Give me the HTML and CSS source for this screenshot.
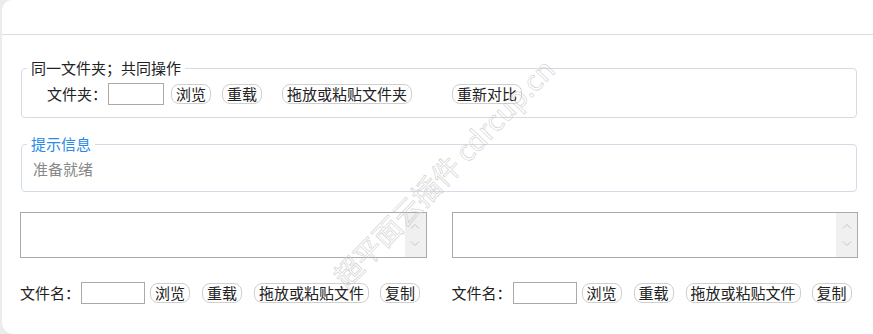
FILE: index.html
```html
<!DOCTYPE html>
<html lang="zh-CN">
<head>
    <meta charset="UTF-8">
    <meta name="viewport" content="width=device-width, initial-scale=1.0">
    <title>文件对比</title>
    <link rel="stylesheet" href="styles.css">
</head>
<body>
    <div class="panel">
        <div class="header"></div>
        <div class="content">
            <fieldset class="group">
                <legend>同一文件夹；共同操作</legend>
                <div class="row folder-row">
                    <span class="label">文件夹：</span>
                    <input class="path folder" type="text">
                    <button class="btn browse">浏览</button>
                    <button class="btn reload">重载</button>
                    <button class="btn drop">拖放或粘贴文件夹</button>
                    <button class="btn recompare">重新对比</button>
                </div>
            </fieldset>

            <fieldset class="group tips">
                <legend>提示信息</legend>
                <div class="status">准备就绪</div>
            </fieldset>

            <div class="compare">
                <div class="side">
                    <div class="textbox">
                        <div class="area"></div>
                        <div class="scroll">
                            <svg width="10" height="6" viewBox="0 0 10 6"><path d="M1 5.5 L5 1.5 L9 5.5" fill="none" stroke="#c4c4c4" stroke-width="1"/></svg>
                            <svg width="10" height="6" viewBox="0 0 10 6"><path d="M1 0.5 L5 4.5 L9 0.5" fill="none" stroke="#c4c4c4" stroke-width="1"/></svg>
                        </div>
                    </div>
                    <div class="row file-row">
                        <span class="label">文件名：</span>
                        <input class="path file" type="text">
                        <button class="btn browse">浏览</button>
                        <button class="btn reload">重载</button>
                        <button class="btn drop">拖放或粘贴文件</button>
                        <button class="btn copy">复制</button>
                    </div>
                </div>
                <div class="side">
                    <div class="textbox">
                        <div class="area"></div>
                        <div class="scroll">
                            <svg width="10" height="6" viewBox="0 0 10 6"><path d="M1 5.5 L5 1.5 L9 5.5" fill="none" stroke="#c4c4c4" stroke-width="1"/></svg>
                            <svg width="10" height="6" viewBox="0 0 10 6"><path d="M1 0.5 L5 4.5 L9 0.5" fill="none" stroke="#c4c4c4" stroke-width="1"/></svg>
                        </div>
                    </div>
                    <div class="row file-row">
                        <span class="label">文件名：</span>
                        <input class="path file" type="text">
                        <button class="btn browse">浏览</button>
                        <button class="btn reload">重载</button>
                        <button class="btn drop">拖放或粘贴文件</button>
                        <button class="btn copy">复制</button>
                    </div>
                </div>
            </div>
        </div>
        <div class="watermark">超平面云插件 cdrcup.cn</div>
    </div>
</body>
</html>
```

FILE: styles.css
```css
body {
    margin: 0;
    padding: 0;
    background: #ececec;
    font-family: "Noto Sans CJK SC", "Noto Sans", sans-serif;
    font-size: 15px;
    color: #222;
    overflow: hidden;
}

.panel {
    position: relative;
    margin-left: 2px;
    height: 334px;
    background: #fff;
    border-radius: 10px 0 0 12px;
    overflow: hidden;
}

.header {
    height: 34px;
    border-bottom: 1px solid #dcdcdc;
}

.content {
    padding: 23px 16px 0 19px;
}

.group {
    margin: 0;
    padding: 5px 5px 12px;
    border: 1px solid #d3dce6;
    border-radius: 4px;
}

.group legend {
    padding: 0 4px;
    line-height: 20px;
}

.tips {
    margin-top: 16px;
    padding-bottom: 12px;
}

.tips legend {
    color: #2b8ae6;
}

.status {
    padding-left: 6px;
    line-height: 20px;
    color: #888;
}

.row {
    display: flex;
    align-items: center;
    height: 22px;
}

.folder-row {
    padding-left: 20px;
}

.label {
    line-height: 20px;
    margin-right: 1px;
    white-space: nowrap;
}

.path {
    box-sizing: border-box;
    height: 22px;
    margin: 0;
    padding: 0 3px;
    border: 1px solid #aaa;
    border-radius: 0;
    outline: none;
}

.folder {
    width: 56px;
}

.file {
    width: 64px;
}

.btn {
    box-sizing: border-box;
    height: 20px;
    padding: 0 4px;
    margin: 0;
    font-family: inherit;
    font-size: 15px;
    line-height: 18px;
    color: #222;
    background: #fff;
    border: 1px solid #cfcfcf;
    border-radius: 8px;
    white-space: nowrap;
}

.folder-row .browse { margin-left: 7px; }
.folder-row .reload { margin-left: 11px; }
.folder-row .drop { margin-left: 20px; }
.folder-row .recompare { margin-left: 40px; }

.file-row .browse { margin-left: 5px; }
.file-row .reload { margin-left: 12px; }
.file-row .drop { margin-left: 12px; }
.file-row .copy { margin-left: 11px; }

.compare {
    display: flex;
    gap: 25px;
    margin: 20px -1px 0;
}

.side {
    flex: 1;
}

.textbox {
    display: flex;
    height: 46px;
    box-sizing: border-box;
    border: 1px solid #aaa;
}

.area {
    flex: 1;
}

.scroll {
    width: 21px;
    background: #f0f0f0;
    display: flex;
    flex-direction: column;
    justify-content: space-between;
    align-items: center;
    padding: 10px 0;
    box-sizing: border-box;
}

.scroll svg {
    display: block;
}

.file-row {
    margin-top: 24px;
}

.watermark {
    position: absolute;
    left: 441px;
    top: 172px;
    transform: translate(-50%, -50%) rotate(-46deg);
    font-size: 28px;
    white-space: nowrap;
    color: transparent;
    -webkit-text-stroke: 0.5px #c6c6c6;
    pointer-events: none;
}
```
